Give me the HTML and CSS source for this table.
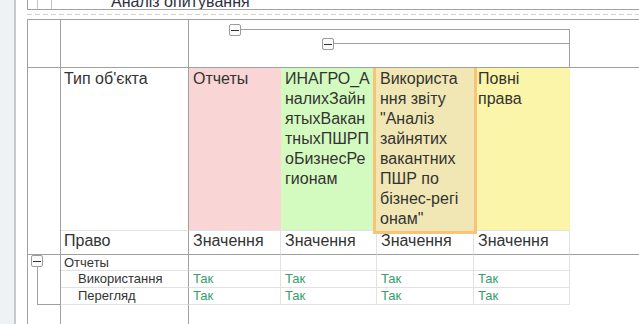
FILE: index.html
```html
<!DOCTYPE html>
<html lang="uk">
<head>
<meta charset="utf-8">
<title>Аналіз опитування</title>
<link rel="stylesheet" href="styles.css">
</head>
<body>
<div class="page">
  <aside class="sidebar"></aside>
  <main class="content">
    <div class="titlebar">
      <div class="tb-c1"></div>
      <div class="tb-c2"></div>
      <div class="tb-title">Аналіз опитування</div>
    </div>
    <div class="dash"></div>
    <div class="grid">
      <!-- header row -->
      <div class="cell ca hdr"></div>
      <div class="cell cb hdr"></div>
      <div class="cell htree">
        <span class="tbtn"></span>
        <div class="bracket">
          <span class="tbtn tbtn2"></span>
          <span class="bline"></span>
        </div>
      </div>

      <!-- object type row -->
      <div class="cell ca side"></div>
      <div class="cell cb big">Тип об'єкта</div>
      <div class="cell big obj pink">Отчеты</div>
      <div class="cell big obj green">ИНАГРО_А<br>налихЗайн<br>ятыхВакан<br>тныхПШРП<br>оБизнесРе<br>гионам</div>
      <div class="cell big obj tan">Використа<br>ння звіту<br>"Аналіз<br>зайнятих<br>вакантних<br>ПШР по<br>бізнес-регі<br>онам"</div>
      <div class="cell big obj yellow">Повні<br>права</div>
      <div class="cell cg"></div>

      <!-- right row -->
      <div class="cell cb big rowend">Право</div>
      <div class="cell big val rowend">Значення</div>
      <div class="cell big val rowend">Значення</div>
      <div class="cell big val rowend">Значення</div>
      <div class="cell big val rowend">Значення</div>

      <!-- data rows -->
      <div class="cell ca tree">
        <span class="tbtn"></span>
        <div class="tline"></div>
      </div>
      <div class="cell cb small">Отчеты</div>
      <div class="cell small dv"></div>
      <div class="cell small dv"></div>
      <div class="cell small dv"></div>
      <div class="cell small dv"></div>

      <div class="cell cb small child">Використання</div>
      <div class="cell small dv yes">Так</div>
      <div class="cell small dv yes">Так</div>
      <div class="cell small dv yes">Так</div>
      <div class="cell small dv yes">Так</div>

      <div class="cell cb small child">Перегляд</div>
      <div class="cell small dv yes">Так</div>
      <div class="cell small dv yes">Так</div>
      <div class="cell small dv yes">Так</div>
      <div class="cell small dv yes">Так</div>

      <div class="cell cb filler"></div>
    </div>
  </main>
</div>
</body>
</html>
```

FILE: styles.css
```css
* {
  box-sizing: border-box;
  margin: 0;
  padding: 0;
}

html, body {
  width: 639px;
  height: 324px;
  overflow: hidden;
  background: #fff;
}

body {
  font-family: "Liberation Sans", Arial, sans-serif;
  color: #333;
}

.page {
  display: flex;
  height: 324px;
}

.sidebar {
  width: 16px;
  flex: none;
  background: #eef2f5;
  border-right: 2px solid #c6c9cc;
}

.content {
  flex: 1;
  min-width: 0;
  display: flex;
  flex-direction: column;
  padding-left: 11px;
}

.titlebar {
  display: flex;
  flex: none;
  height: 10px;
  border-bottom: 1px solid #a0a0a0;
  overflow: hidden;
}

.tb-c1 {
  width: 10px;
  flex: none;
  border-left: 1px solid #a0a0a0;
}

.tb-c2 {
  width: 15px;
  flex: none;
  border-left: 1px solid #c4c4c4;
  border-right: 1px solid #c4c4c4;
}

.tb-title {
  margin-left: 59px;
  margin-top: -6px;
  font-size: 16px;
  line-height: 16px;
  white-space: nowrap;
  color: #2e3040;
}

.dash {
  flex: none;
  height: 1px;
  margin: 4px 0;
  background: repeating-linear-gradient(90deg, #d2d2d2 0 5px, transparent 5px 8px);
}

.grid {
  flex: 1;
  display: grid;
  grid-template-columns: 33px 128px 92px 96px 97px 96px 1fr;
  grid-template-rows: 48px 163px 24px 16px 17px 17px 1fr;
  border-top: 1px solid #a0a0a0;
  border-left: 1px solid #a0a0a0;
}

.cell {
  min-width: 0;
}

.ca {
  grid-column: 1;
  border-right: 1px solid #a0a0a0;
}

.cb {
  grid-column: 2;
  border-right: 1px solid #a0a0a0;
  padding-left: 3px;
}

.hdr {
  border-bottom: 1px solid #a0a0a0;
}

.side {
  grid-row: span 2;
  border-bottom: 1px solid #a0a0a0;
}

.cg {
  grid-row: span 2;
  border-bottom: 1px solid #a0a0a0;
}

/* header collapse tree */
.htree {
  grid-column: 3 / -1;
  display: flex;
  padding: 4px 0 0 40px;
  border-bottom: 1px solid #a0a0a0;
}

.tbtn {
  flex: none;
  width: 12px;
  height: 12px;
  border: 1px solid #9c9c9c;
  border-radius: 2px;
  background: #fbfbfb;
  display: flex;
  align-items: center;
  justify-content: center;
}

.tbtn::before {
  content: "";
  width: 8px;
  height: 1px;
  background: #333;
}

.bracket {
  width: 329px;
  flex: none;
  margin-top: 5px;
  border-top: 1px solid #a0a0a0;
  border-right: 1px solid #a0a0a0;
  display: flex;
  align-items: flex-start;
  padding-top: 8px;
}

.tbtn2 {
  margin-left: 81px;
}

.bline {
  flex: 1;
  height: 1px;
  margin-top: 5px;
  background: #a0a0a0;
}

/* text sizes */
.big {
  font-size: 16px;
  line-height: 20px;
  border-bottom: 1px solid #e2e2e2;
}

.obj {
  padding: 1px 0 0 4px;
  white-space: nowrap;
}

.cb.big {
  padding-top: 1px;
}

.pink {
  background: #f9d5d5;
}

.green {
  background: #d3fbbf;
}

.tan {
  position: relative;
  z-index: 1;
  margin: 0 -3px -3px -4px;
  background: #f0e7b4;
  border: 3px solid #f7c479;
  border-top: 0;
  padding-left: 4px;
}

.yellow {
  background: #fbf5a9;
}

.rowend {
  border-bottom: 1px solid #a0a0a0;
  padding-top: 0;
}

.cb.rowend {
  padding-top: 0;
}

.val {
  padding-left: 4px;
  border-right: 1px solid #e2e2e2;
}

/* data rows */
.tree {
  grid-row: span 4;
  padding: 0 0 0 3px;
}

.tline {
  width: 23px;
  height: 38px;
  margin-left: 6px;
  border-left: 1px solid #a0a0a0;
  border-bottom: 1px solid #a0a0a0;
}

.small {
  font-size: 13px;
  line-height: 15px;
  white-space: nowrap;
  border-bottom: 1px solid #e2e2e2;
}

.child {
  padding-left: 17px;
}

.dv {
  padding-left: 4px;
  border-right: 1px solid #e2e2e2;
}

.yes {
  color: #33a06c;
}

.filler {
  grid-row: 7;
}
```
